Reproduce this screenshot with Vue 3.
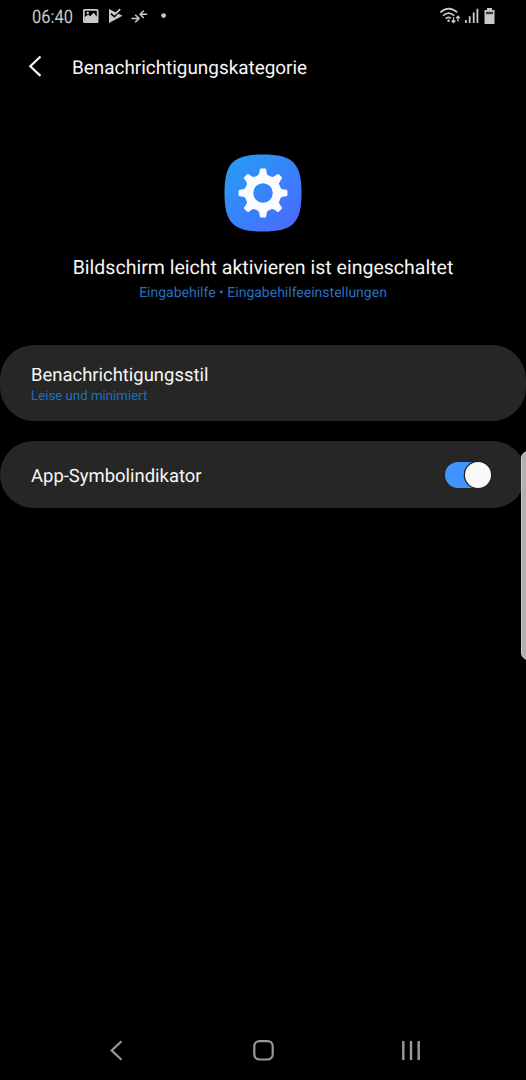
<script setup>
import { ref } from 'vue'

const enabled = ref(true)
const teeth = [0, 45, 90, 135, 180, 225, 270, 315]
</script>

<template>
  <div class="screen">
    <header class="status">
      <span class="clock">06:40</span>
      <svg class="status-left" width="90" height="32" viewBox="80 0 90 32">
        <path fill-rule="evenodd" fill="#c9c9c9" d="M84.500 9h12.500q1.500 0 1.500 1.500v11q0 1.500-1.500 1.500h-12.500q-1.500 0-1.500-1.500v-11q0-1.500 1.500-1.500zM84.700 10.700V20.500H96.800V10.700z" />
        <path fill="#c9c9c9" d="M84.500 21v-3.800l3.600-2.700 2.200 1.800 3.200-3.600 3.500 4v4.300z" />
        <circle cx="87.700" cy="12.900" r="1.200" fill="#c9c9c9" />
        <path fill="#c9c9c9" d="M109 9l13.500 6.800L109 23z" />
        <path fill="none" stroke="#000" stroke-width="1.500" d="M110.800 13.700l3.600 3 6.300-6.500" />
        <path fill="none" stroke="#c9c9c9" stroke-width="1.800" d="M115.500 13.800l4.700-4.600" />
        <g fill="none" stroke="#c9c9c9" stroke-width="1.500">
          <path d="M131.500 18.500h7M135.200 14.800l3.800 3.700-3.800 3.600M147.200 14.300h-6.700M143.800 10.700l-3.700 3.600 3.700 3.700" />
        </g>
        <circle cx="163.600" cy="15.600" r="2.400" fill="#c9c9c9" />
      </svg>
      <svg class="status-right" width="60" height="32" viewBox="438 0 60 32">
        <g fill="none" stroke="#c9c9c9" stroke-width="1.700">
          <path d="M440.300 12.400q8.400-7.600 17 0M443 15.700q5.700-5.200 11.300 0M445.700 18.700q2.500-2.500 5.100-.3" />
          <path stroke-width="1.300" d="M453.500 17.300v5M451.600 20.500l1.900 2 1.900-2M458 21.500v-5M456.100 18.200l1.900-2 1.900 2" />
        </g>
        <circle cx="448.500" cy="20.800" r="1.200" fill="#c9c9c9" />
        <path fill="#c9c9c9" d="M465 20h1.800v3H465zM468.800 16.200h1.800V23h-1.800zM472.800 12.400h1.800V23h-1.800zM476.500 8.800h1.800V23h-1.800z" />
        <path fill="#c9c9c9" d="M487 8h5v2h2.500v14h-10V10h2.500z" />
        <path fill="#3a3a3a" d="M486 11.800h7v2.400h-7z" />
      </svg>
    </header>

    <div class="titlebar">
      <svg width="20" height="26" viewBox="0 0 20 26"><path d="M15.500 3.500L5.300 13.200l10.200 9.700" fill="none" stroke="#f4f4f4" stroke-width="2.200" /></svg>
      <h1>Benachrichtigungskategorie</h1>
    </div>

    <section class="hero">
      <svg class="app-icon" width="80" height="80" viewBox="-40 -40 80 80">
        <defs>
          <linearGradient id="tile" x1="0" y1="0" x2="1" y2="1">
            <stop offset="0.080" stop-color="#279bf5" />
            <stop offset="0.900" stop-color="#496cff" />
          </linearGradient>
        </defs>
        <path fill="url(#tile)" d="M0-38.500C30-38.500 38.500-30 38.500 0S30 38.500 0 38.500-38.500 30-38.500 0-30-38.500 0-38.500z" />
        <g fill="#fafcff">
          <path v-for="a in teeth" :key="a" :transform="`rotate(${a})`" d="M-6.500-15L-3.800-19.500-3.200-23.300Q-3-24.500-1.800-24.500H1.800Q3-24.500 3.200-23.300L3.800-19.500 6.500-15z" />
        </g>
        <circle r="14" fill="none" stroke="#fafcff" stroke-width="8.500" />
      </svg>
      <h2>Bildschirm leicht aktivieren ist eingeschaltet</h2>
      <p>Eingabehilfe • Eingabehilfeeinstellungen</p>
    </section>

    <main>
      <div class="card style-card">
        <div>
          <div class="label">Benachrichtigungsstil</div>
          <div class="sub">Leise und minimiert</div>
        </div>
      </div>
      <div class="card toggle-card">
        <div class="label">App-Symbolindikator</div>
        <button class="switch" :class="{ on: enabled }" aria-label="App-Symbolindikator" @click="enabled = !enabled"><i></i></button>
      </div>
    </main>

    <div class="edge-handle"></div>

    <nav>
      <svg width="526" height="60" viewBox="0 1020 526 60" fill="none" stroke="#999" stroke-width="2.200">
        <path d="M121.500 1041.300l-9.800 9.200 9.800 9.200" />
        <rect x="254.300" y="1041.100" width="18.400" height="18.400" rx="5.200" />
        <path d="M403.300 1041v19M411 1041v19M418.700 1041v19" stroke-width="2.400" />
      </svg>
    </nav>
  </div>
</template>

<style>
body { background: #000; }
</style>

<style scoped>
.screen {
  position: relative;
  display: flex;
  flex-direction: column;
  width: 526px;
  height: 1080px;
  overflow: hidden;
  background: #000;
  color: #f6f6f6;
  font-family: Roboto, "Noto Sans", sans-serif;
  text-rendering: geometricPrecision;
}
svg { display: block; flex: none; }
.status { display: flex; height: 32px; padding: 0 28px 0 31.500px; }
.clock {
  width: 48.500px;
  font-size: 18.500px;
  line-height: 34px;
  color: #c9c9c9;
  transform: scaleX(.89);
  transform-origin: left;
}
.status-right { margin-left: auto; }
.titlebar { display: flex; align-items: center; height: 68px; padding-left: 25px; }
h1, h2, p { margin: 0; font-weight: 400; white-space: nowrap; }
h1 { margin-left: 27px; padding-top: 3px; font-size: 18.900px; line-height: 26px; }
.hero { display: flex; flex-direction: column; align-items: center; height: 191.500px; padding-top: 53px; }
h2 { margin-top: 22px; font-size: 19.550px; line-height: 26px; }
p { margin-top: 3px; font-size: 14px; line-height: 18px; color: #2a6fbd; }
.card {
  display: flex;
  align-items: center;
  justify-content: space-between;
  box-sizing: border-box;
  padding: 0 35.500px 0 31px;
  border-radius: 34px;
  background: #262626;
}
.style-card { height: 76.500px; margin-bottom: 20px; }
.toggle-card { height: 67px; }
.label { padding-top: 2px; font-size: 18.450px; line-height: 24px; }
.sub { padding-top: 1px; margin-bottom: -1px; font-size: 13.250px; line-height: 18px; color: #1b6ec0; }
.switch {
  display: flex;
  width: 46px;
  height: 26px;
  padding: 0;
  border: 0;
  border-radius: 13px;
  background: #4194ff;
}
.switch i { width: 26px; height: 26px; border-radius: 50%; background: #fafafa; box-shadow: 0 0 0 1.300px #222; }
.switch.on { justify-content: flex-end; }
.edge-handle {
  position: absolute;
  top: 451px;
  left: 521px;
  box-sizing: border-box;
  width: 16px;
  height: 209px;
  border: 1px solid #ccc;
  border-radius: 7px;
  background: rgba(190, 190, 190, .92);
}
nav { margin-top: auto; }
</style>
